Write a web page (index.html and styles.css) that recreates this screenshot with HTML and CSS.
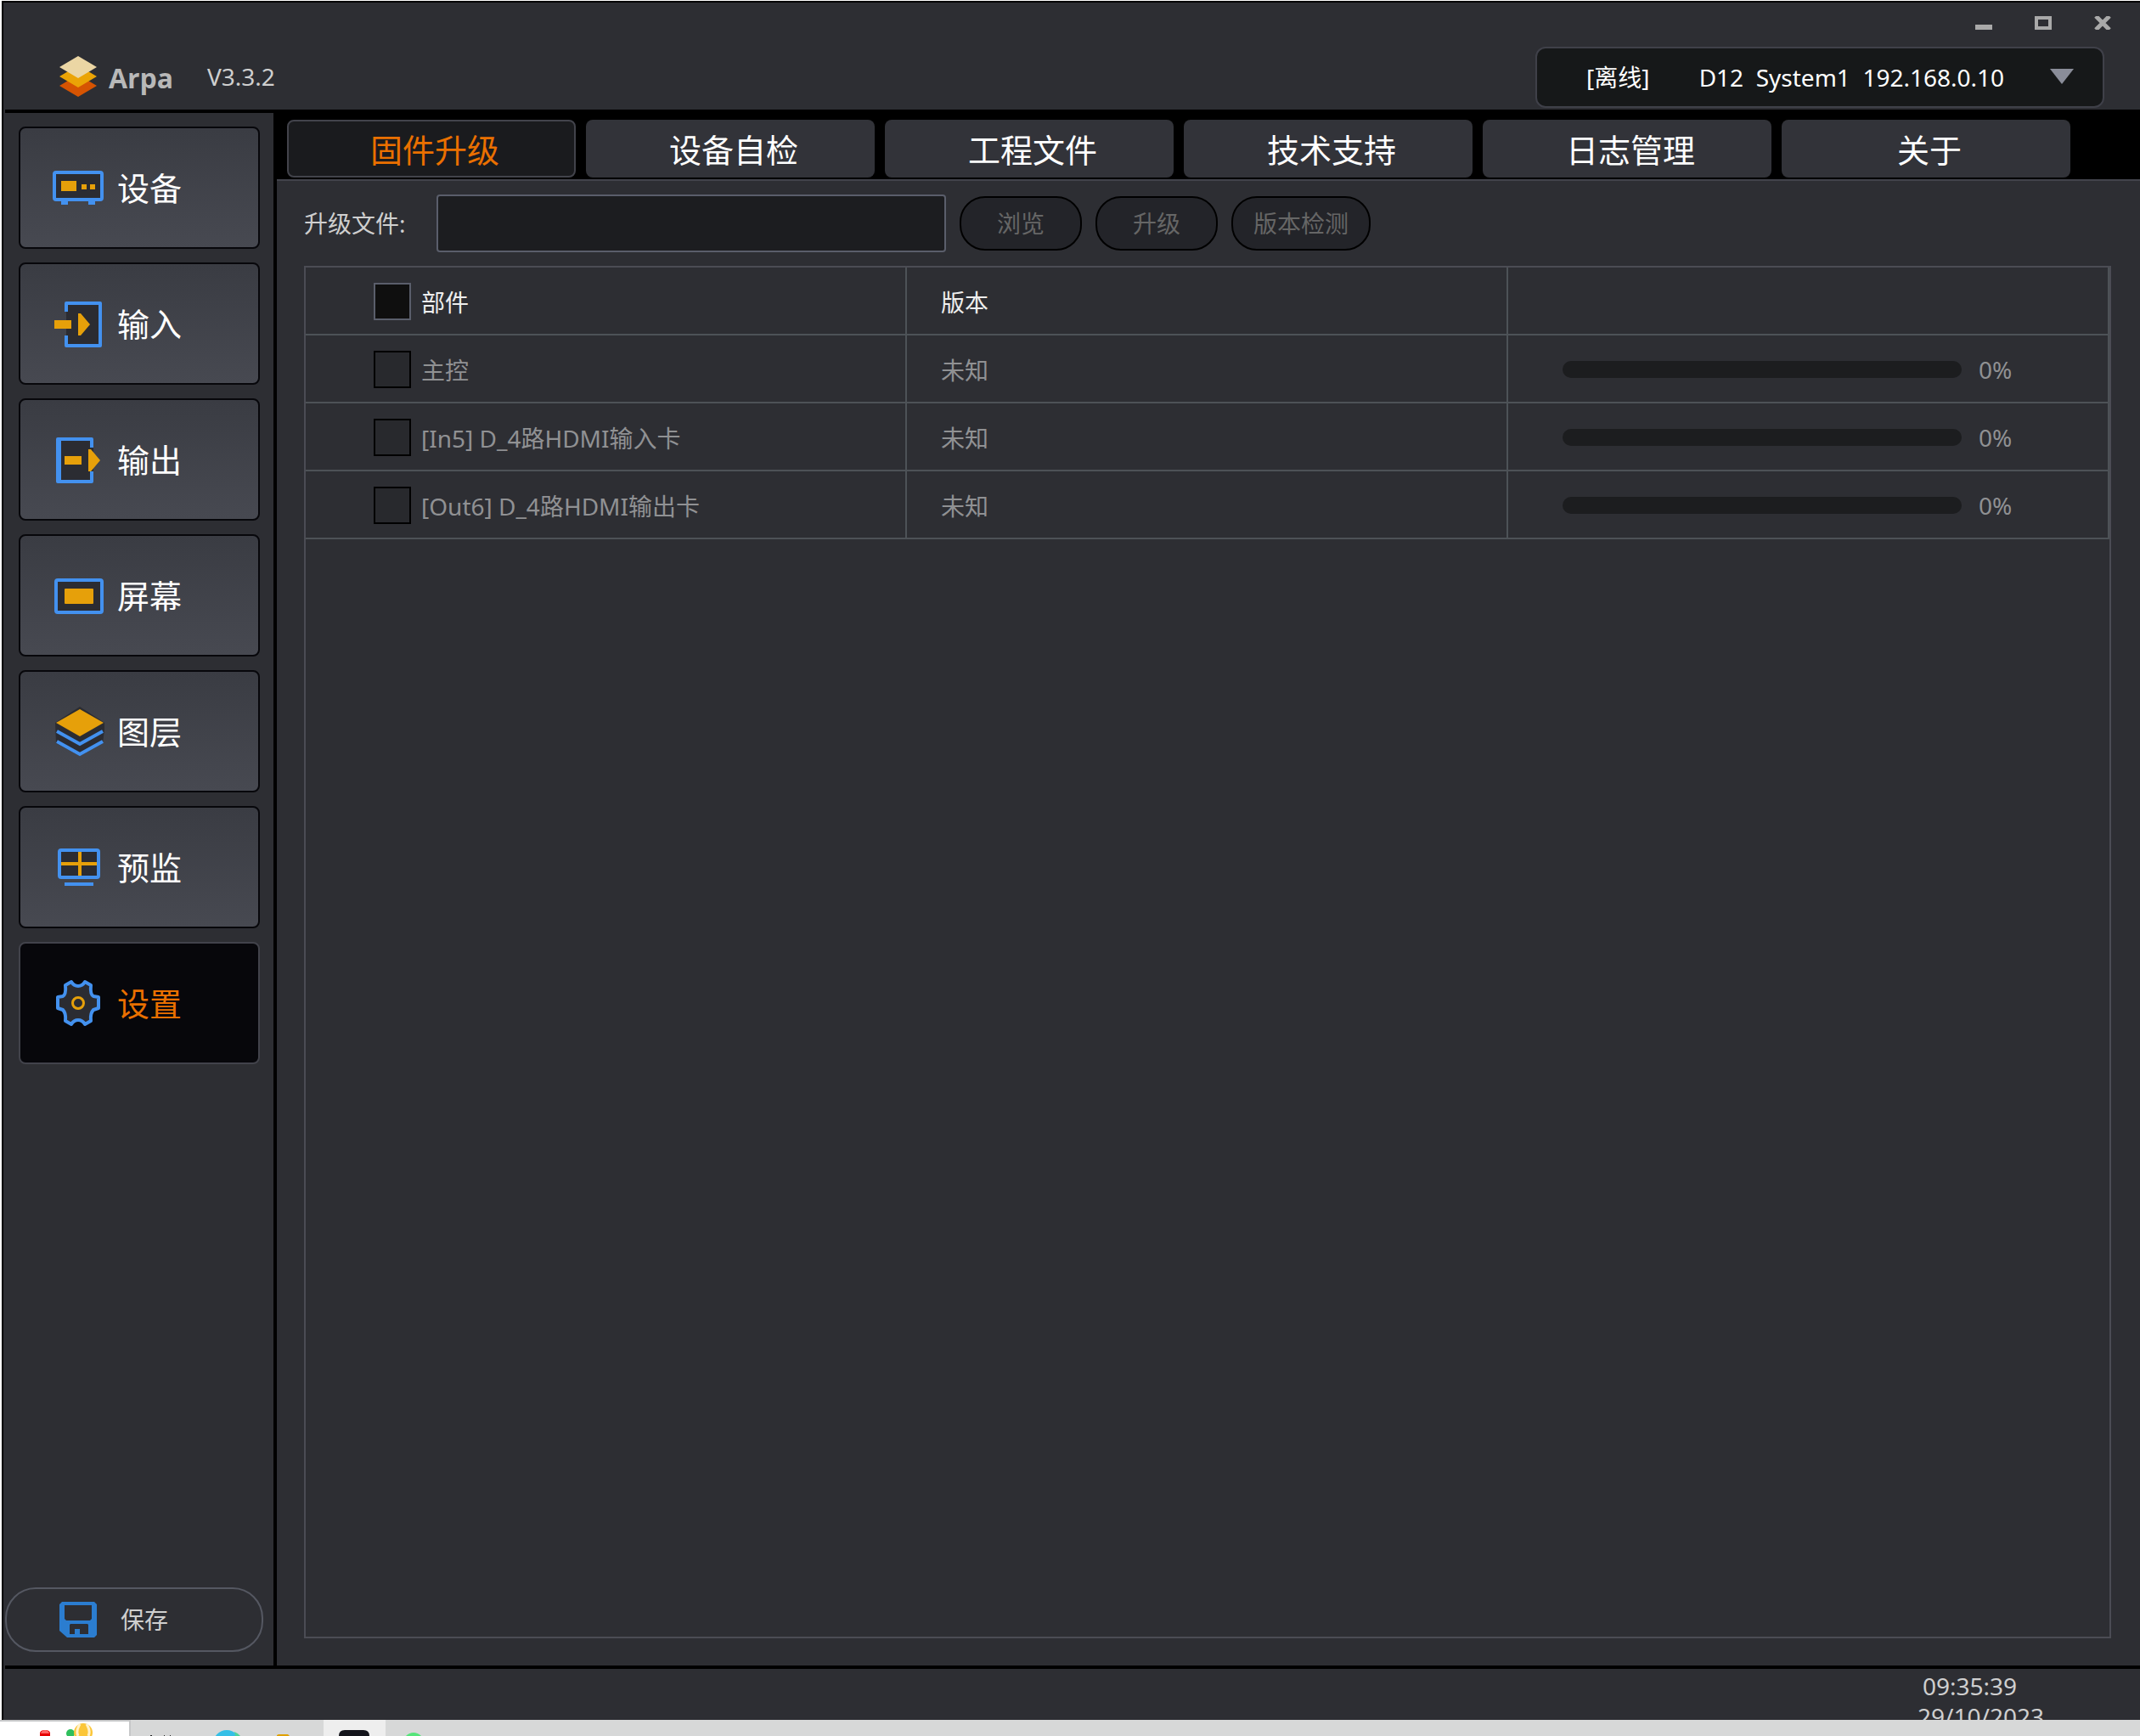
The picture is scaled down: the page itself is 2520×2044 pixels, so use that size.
FILE: index.html
```html
<!DOCTYPE html>
<html lang="zh-CN">
<head>
<meta charset="utf-8">
<title>Arpa</title>
<link rel="stylesheet" href="styles.css">
</head>
<body>
<div class="app">
  <header class="header">
    <div class="brand">
      <svg class="logo" width="44" height="48" viewBox="0 0 44 48" aria-hidden="true">
        <path fill="#d65402" d="M0 35 22 22l22 13-22 13z"/>
        <path fill="#eba406" d="M0 24 22 11l22 13-22 13z"/>
        <path fill="#ebd6a4" d="M0 13 22 0l22 13-22 13z"/>
      </svg>
      <span class="name">Arpa</span>
      <span class="version">V3.3.2</span>
    </div>
    <div class="header-side">
      <div class="window-controls">
        <button type="button" aria-label="最小化"><svg width="20" height="16"><path fill="#a9a9a9" d="M0 10h20v6H0z"/></svg></button>
        <button type="button" aria-label="最大化"><svg width="20" height="16"><path fill="none" stroke="#a9a9a9" stroke-width="4" d="M2 2h16v12H2z"/></svg></button>
        <button type="button" aria-label="关闭"><svg width="20" height="16"><path fill="none" stroke="#a9a9a9" stroke-width="5" d="M2 0l16 16M18 0 2 16"/></svg></button>
      </div>
      <div class="device-picker">
        <select aria-label="当前设备"><option>[离线]&nbsp;&nbsp;&nbsp;&nbsp;&nbsp;&nbsp;&nbsp;&nbsp;D12&nbsp; System1&nbsp; 192.168.0.10</option></select>
        <svg class="arrow" width="28" height="18" aria-hidden="true"><path fill="#8a8d99" d="M0 0h28L14 18z"/></svg>
      </div>
    </div>
  </header>

  <div class="body">
    <aside class="sidebar">
      <nav class="nav">
        <button type="button"><svg width="64" height="60" viewBox="0 0 64 60"><rect x="4" y="12" width="56" height="32" rx="2" fill="#2b2c32" stroke="#4391ef" stroke-width="4"/><path fill="#4391ef" d="M12 46h8v4h-8zM44 46h8v4h-8z"/><path fill="#e6a00a" d="M12 22h18v12H12zM36 26h6v6h-6zM46 26h6v6h-6z"/></svg>设备</button>
        <button type="button"><svg width="64" height="60" viewBox="0 0 64 60"><path fill="#2b2c32" d="M18 6h42v48H18z"/><path fill="none" stroke="#4391ef" stroke-width="4" stroke-linejoin="round" d="M18 16V6h40v50H18V44"/><path fill="#e6a00a" d="M4 26h20v10H4zM32 18h3l11 13-11 13h-3z"/></svg>输入</button>
        <button type="button"><svg width="64" height="60" viewBox="0 0 64 60"><path fill="#2b2c32" d="M8 6h42v48H8z"/><path fill="none" stroke="#4391ef" stroke-width="4" stroke-linejoin="round" d="M48 16V6H8v50h40V44"/><path fill="#4391ef" d="M6 6h6v50H6z"/><path fill="#e6a00a" d="M16 26h20v10H16zM44 18h3l11 13-11 13h-3z"/></svg>输出</button>
        <button type="button"><svg width="64" height="60" viewBox="0 0 64 60"><rect x="6" y="12" width="54" height="38" rx="2" fill="#2b2c32" stroke="#4391ef" stroke-width="4"/><rect x="16" y="22" width="34" height="18" rx="1" fill="#e6a00a"/></svg>屏幕</button>
        <button type="button"><svg width="64" height="60" viewBox="0 0 64 60"><path fill="#2b2c32" d="M5 20 34 1l29 19v8l-2 16-27 15L6 44z"/><path fill="#e6a00a" d="M6 20 34 4l28 16-28 16z"/><path fill="none" stroke="#4391ef" stroke-width="4" d="M7 30l27 15 27-15M7 42l27 15 27-15"/></svg>图层</button>
        <button type="button"><svg width="64" height="60" viewBox="0 0 64 60"><rect x="10" y="10" width="46" height="32" rx="2" fill="#2b2c32" stroke="#4391ef" stroke-width="4"/><path fill="none" stroke="#e6a00a" stroke-width="4" d="M12 26h42M34 12v28"/><path stroke="#4391ef" stroke-width="4" d="M16 50h34"/></svg>预监</button>
        <button type="button" class="active" aria-current="page"><svg width="64" height="60" viewBox="0 0 64 60"><path fill="#2b2c32" stroke="#4391ef" stroke-width="4" stroke-linejoin="round" d="M24 5Q27 10 32 10T40 5L47 9Q46 20 50 22L56 23V36L50 38Q46 42 47 51L40 55Q37 50 32 50T24 55L17 51Q18 42 14 38L8 36V23L14 22Q18 20 17 9Z"/><circle cx="32" cy="30" r="6.500" fill="none" stroke="#e6a00a" stroke-width="3"/></svg>设置</button>
      </nav>
      <button type="button" class="save"><svg width="44" height="42" viewBox="0 0 44 42"><path fill="#2b7dd0" fill-rule="evenodd" d="M3 0h38l3 3v36l-3 3H9l-9-8V3zM6 4v16l2 2h28l2-2V4zM12 27v11h6v-6h6v6h10V27l-1-1H13z"/></svg>保存</button>
    </aside>

    <main class="main">
      <div class="tabs" role="tablist">
        <button type="button" role="tab" aria-selected="true" class="active">固件升级</button>
        <button type="button" role="tab">设备自检</button>
        <button type="button" role="tab">工程文件</button>
        <button type="button" role="tab">技术支持</button>
        <button type="button" role="tab">日志管理</button>
        <button type="button" role="tab">关于</button>
      </div>
      <div class="toolbar">
        <label for="file">升级文件:</label>
        <input id="file" type="text">
        <button type="button" disabled>浏览</button>
        <button type="button" disabled>升级</button>
        <button type="button" disabled>版本检测</button>
      </div>
      <div class="panel">
        <table class="parts">
          <thead>
            <tr><th><label><input type="checkbox">部件</label></th><th>版本</th><th></th></tr>
          </thead>
          <tbody>
            <tr><td><label><input type="checkbox" disabled>主控</label></td><td>未知</td><td><div class="progress"><span class="bar"></span>0%</div></td></tr>
            <tr><td><label><input type="checkbox" disabled>[In5] D_4路HDMI输入卡</label></td><td>未知</td><td><div class="progress"><span class="bar"></span>0%</div></td></tr>
            <tr><td><label><input type="checkbox" disabled>[Out6] D_4路HDMI输出卡</label></td><td>未知</td><td><div class="progress"><span class="bar"></span>0%</div></td></tr>
          </tbody>
        </table>
      </div>
    </main>
  </div>

  <footer class="status">
    <div class="clock">
      <time class="time">09:35:39</time>
      <time>29/10/2023</time>
    </div>
  </footer>
</div>
<div class="taskbar" aria-hidden="true">
  <svg width="520" height="19" viewBox="0 0 520 19">
    <path fill="#c6c7c8" d="M0 0h154v19H0z"/><path fill="#fff" d="M0 2h152v17H0z"/>
    <path fill="#e60000" d="M47 19v-3q0-4 6-4t6 4v3z"/><path fill="#ff6464" d="M48 16q1-4 5-4t5 4z"/>
    <circle cx="83" cy="16" r="5" fill="#2fbf5c"/>
    <circle cx="98" cy="15" r="11" fill="#fbc638"/><path fill="none" stroke="#fff2cc" stroke-width="3" d="M94 5q-5 8-2 14M102 5q5 8 2 14"/>
    <path fill="#222" d="M177 18h2v1h-2zM193 18h1v1h-1zM200 18h1v1h-1z"/>
    <circle cx="267" cy="28" r="16" fill="#35bfe6"/><path fill="#4ed39b" d="M276 14q5 2 7 5h-6z"/>
    <path fill="#e0a100" d="M326 19v-1l2-1h11l2 2z"/>
    <path fill="#eee" d="M381 0h73v19h-73z"/><path fill="#14151c" d="M399 19q0-7 7-7h22q7 0 7 7z"/>
    <circle cx="487" cy="27" r="12" fill="#55e57a"/>
  </svg>
</div>
</body>
</html>
```
FILE: styles.css
```css
* {
  box-sizing: border-box;
}

body {
  margin: 0;
  min-height: 100vh;
  display: flex;
  flex-direction: column;
  background: #fff;
  color: #cfcfcf;
  font: 28px/36px "Noto Sans", "Noto Sans CJK SC", sans-serif;
}

button,
input,
select {
  margin: 0;
  padding: 0;
  font: inherit;
  color: inherit;
}

svg {
  display: block;
  flex: none;
}

.app {
  flex: 1;
  display: flex;
  flex-direction: column;
  margin: 1px 0 0 2px;
  border: 2px solid #000;
  border-right-width: 0;
  border-bottom: 0;
  background: #2d2e33;
}

.header {
  display: flex;
  justify-content: space-between;
  height: 126px;
  flex: none;
  padding: 16px 34px 0 66px;
}

.brand {
  display: flex;
  align-items: center;
  padding-top: 32px;
}

.name {
  margin: 4px 0 0 14px;
  width: 116px;
  color: #b8b8b8;
  font-family: "Open Sans", sans-serif;
  font-weight: 700;
  font-size: 32px;
}

.header-side {
  display: flex;
  flex-direction: column;
  align-items: flex-end;
  gap: 20px;
}

.window-controls {
  display: flex;
  gap: 50px;
}

.window-controls button {
  border: 0;
  background: none;
}

.device-picker {
  position: relative;
  width: 670px;
  margin-right: 8px;
}

.device-picker select {
  appearance: none;
  width: 100%;
  height: 72px;
  padding: 0 58px;
  border: 2px solid #3f4049;
  border-radius: 12px;
  background: #161819;
  color: #fff;
}

.device-picker .arrow {
  position: absolute;
  right: 36px;
  top: 26px;
}

.body {
  flex: 1;
  display: flex;
  margin-left: 2px;
  border-top: 4px solid #000;
  border-bottom: 4px solid #000;
}

.sidebar {
  width: 320px;
  flex: none;
  display: flex;
  flex-direction: column;
  justify-content: space-between;
  padding: 16px 12px 16px 0;
  border-right: 4px solid #000;
}

.nav {
  display: flex;
  flex-direction: column;
  gap: 16px;
  padding: 0 4px 0 16px;
}

.nav button {
  display: flex;
  align-items: center;
  gap: 14px;
  height: 144px;
  padding-left: 36px;
  border: 2px solid #07070b;
  border-radius: 8px;
  background: linear-gradient(#3a3c43, #474951);
  color: #fff;
  font-size: 38px;
}

.nav .active {
  border-color: #42434b;
  background: #07070b;
  color: #ea7000;
}

.save {
  display: flex;
  align-items: center;
  gap: 28px;
  height: 76px;
  padding-left: 62px;
  border: 2px solid #555862;
  border-radius: 36px;
  background: none;
}

.main {
  flex: 1;
  display: flex;
  flex-direction: column;
  min-width: 0;
}

.tabs {
  display: flex;
  gap: 12px;
  padding: 8px 0 2px 12px;
  border-bottom: 2px solid #42434b;
  background: #000;
}

.tabs button {
  width: 340px;
  height: 68px;
  padding: 2px 0 0 8px;
  border: 0;
  border-radius: 8px;
  background: #323339;
  color: #fff;
  font-size: 38px;
}

.tabs .active {
  border: 2px solid #42434b;
  background: #1a1b1e;
  color: #ea7000;
}

.toolbar {
  display: flex;
  align-items: center;
  gap: 16px;
  padding: 16px 32px;
}

.toolbar label {
  width: 140px;
}

.toolbar input {
  width: 600px;
  height: 68px;
  padding: 0 12px;
  border: 2px solid #5a5e6b;
  border-radius: 4px;
  background: #1c1d20;
}

.toolbar button {
  min-width: 144px;
  height: 64px;
  padding: 0 24px;
  border: 2px solid #000;
  border-radius: 30px;
  background: #232429;
  color: #666;
}

.panel {
  flex: 1;
  margin: 0 34px 32px 32px;
  border: 2px solid #4b4c54;
}

.parts {
  width: 100%;
  table-layout: fixed;
  border-collapse: separate;
  border-spacing: 0;
  color: #909193;
}

.parts th,
.parts td {
  height: 80px;
  padding: 4px 0 0 40px;
  border: solid #4d5257;
  border-width: 0 2px 2px 0;
  text-align: left;
  font-weight: 400;
}

.parts td:last-child {
  padding-top: 2px;
}

.parts th {
  color: #eee;
}

.parts tr > :first-child {
  padding-left: 80px;
}

.parts label {
  display: flex;
  align-items: center;
  gap: 12px;
}

.parts input {
  appearance: none;
  width: 44px;
  height: 44px;
  margin-bottom: 2px;
  border: 2px solid #000;
  background: #28292d;
}

.parts th input {
  border-color: #5a5e6b;
  background: #0f0f0f;
}

.progress {
  display: flex;
  align-items: center;
  gap: 20px;
  padding-left: 24px;
}

.bar {
  width: 470px;
  height: 20px;
  border-radius: 10px;
  background: #1c1d1f;
}

.status {
  display: flex;
  justify-content: flex-end;
  height: 60px;
  flex: none;
  overflow: hidden;
  padding: 2px 108px 0 0;
}

.clock {
  display: flex;
  flex-direction: column;
  width: 154px;
}

.time {
  padding-left: 6px;
}

.taskbar {
  height: 19px;
  flex: none;
  overflow: hidden;
  background: #d7d8d8;
}
```
